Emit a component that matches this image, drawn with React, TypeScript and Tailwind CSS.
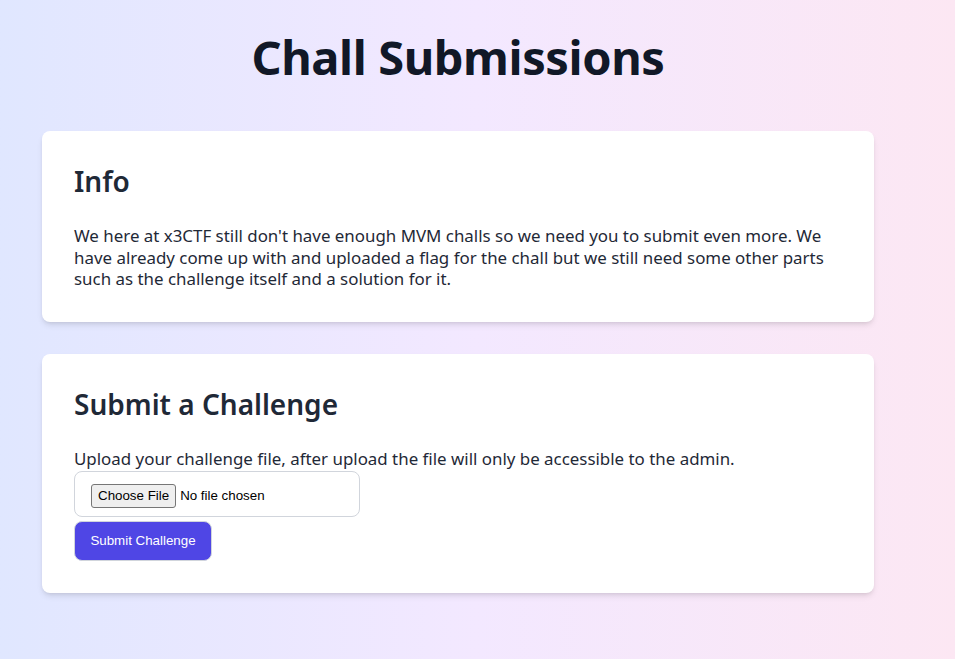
import React from 'react';

const App: React.FC = () => {
  return (
    <div className="min-h-[659px] w-full bg-gradient-to-r from-[#e0e7ff] via-[#f3e8ff] to-[#fce7f3] font-['Noto_Sans',sans-serif]">
      <div className="w-[916px] flex flex-col items-center pt-[29px] pb-[66px]">
        {/* Title */}
        <h1 className="text-[47px] leading-[56px] font-bold text-[#111827] tracking-[-0.4px]">
          Chall Submissions
        </h1>

        {/* Info card */}
        <div className="mt-[46px] w-[832px] bg-white rounded-lg shadow-md p-8">
          <h2 className="text-[28px] leading-[36px] font-semibold text-[#1f2937]">Info</h2>
          <p className="mt-[26px] text-[16.9px] leading-[21.5px] text-[#1f2937]">
            We here at x3CTF still don't have enough MVM challs so we need you to submit even more. We have already come up with and uploaded a flag for the chall but we still need some other parts such as the challenge itself and a solution for it.
          </p>
        </div>

        {/* Submit card */}
        <div className="mt-8 w-[832px] bg-white rounded-lg shadow-md p-8">
          <h2 className="text-[28px] leading-[36px] font-semibold text-[#1f2937]">Submit a Challenge</h2>
          <p className="mt-[26px] text-[16.9px] leading-[21.5px] text-[#1f2937]">
            Upload your challenge file, after upload the file will only be accessible to the admin.
          </p>
          <form className="flex flex-col items-start" onSubmit={(e) => e.preventDefault()}>
            <input
              type="file"
              className="mt-[2px] w-[286px] h-[46px] px-4 py-3 border border-gray-300 rounded-lg text-[13.33px] text-black font-['Liberation_Sans',Arial,sans-serif] file:mr-1 file:px-[6px] file:py-[1px] file:border file:border-[#767676] file:rounded-[3px] file:bg-[#efefef] file:text-black"
            />
            <button
              type="submit"
              className="mt-[4px] w-[138px] h-[40px] bg-[#4f46e5] border border-gray-300 rounded-lg text-white text-[13.33px] font-['Liberation_Sans',Arial,sans-serif]"
            >
              Submit Challenge
            </button>
          </form>
        </div>
      </div>
    </div>
  );
};

export default App;
